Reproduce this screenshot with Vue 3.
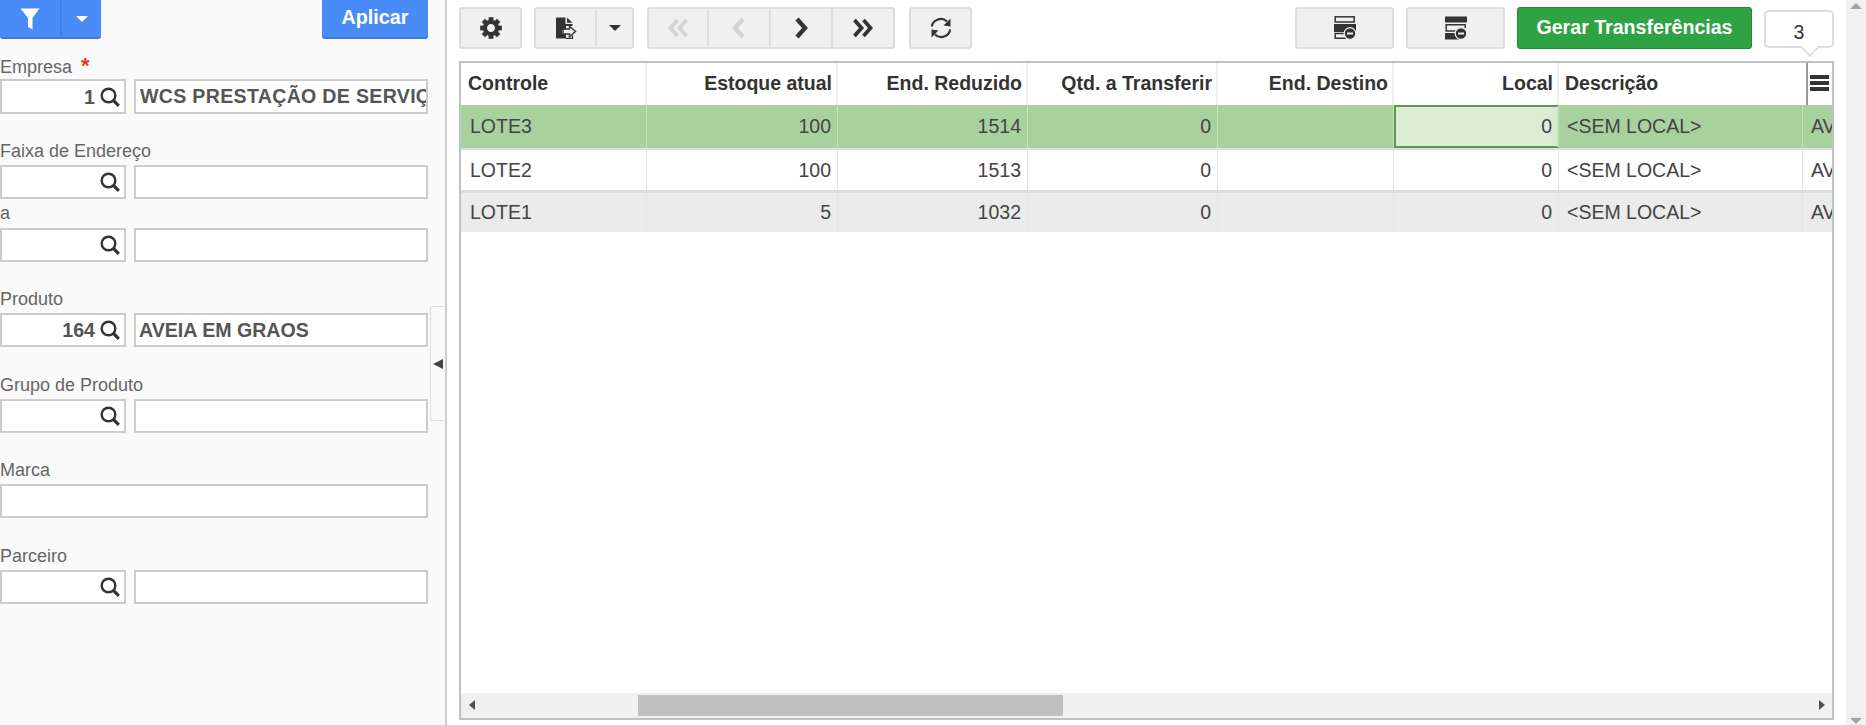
<script setup>
const columns = [
  { title: 'Controle', width: 186, left: true },
  { title: 'Estoque atual', width: 191 },
  { title: 'End. Reduzido', width: 190 },
  { title: 'Qtd. a Transferir', width: 190 },
  { title: 'End. Destino', width: 176 },
  { title: 'Local', width: 165 },
  { title: 'Descrição', width: 244, left: true },
  { title: '', width: 40, left: true }
]
const rows = [
  { id: 1, tone: 'selected', cells: ['LOTE3', '100', '1514', '0', '', '0', '<SEM LOCAL>', 'AVEIA'] },
  { id: 2, tone: 'plain', cells: ['LOTE2', '100', '1513', '0', '', '0', '<SEM LOCAL>', 'AVEIA'] },
  { id: 3, tone: 'alt', cells: ['LOTE1', '5', '1032', '0', '', '0', '<SEM LOCAL>', 'AVEIA'] }
]
const filters = [
  { label: 'Faixa de Endereço', search: true },
  { label: 'a', search: true, tight: true },
  { label: 'Produto', search: true, code: '164', name: 'AVEIA EM GRAOS' },
  { label: 'Grupo de Produto', search: true },
  { label: 'Marca' },
  { label: 'Parceiro', search: true }
]
const navIcons = [
  { d: 'M10.5 3L3.5 11L10.5 19M19.5 3L12.5 11L19.5 19', w: 3.8, off: true },
  { d: 'M15 2L7 11L15 20', w: 4.4, off: true },
  { d: 'M7 2L15 11L7 20', w: 4.4, off: false },
  { d: 'M2.5 3L9.5 11L2.5 19M11.5 3L18.5 11L11.5 19', w: 3.8, off: false }
]
const teeth = [0, 45, 90, 135, 180, 225, 270, 315]
const colStyle = (c) => ({ width: c.width + 'px' })
</script>

<template>
  <div class="page">
    <aside class="panel">
      <div class="panel-top">
        <div class="btn-blue split">
          <span class="funnel-wrap">
            <svg width="20" height="22" viewBox="0 0 20 22"><path d="M0.5 0.5H19.5L12.5 10V21.5L8 19V10Z" fill="#fff" /></svg>
          </span>
          <span class="caret-wrap"><i class="caret white"></i></span>
        </div>
        <button class="btn-blue apply">Aplicar</button>
      </div>

      <div class="field first">
        <label class="lbl">Empresa <b class="req">*</b></label>
        <div class="inputs">
          <div class="inp code first-inp"><span>1</span>
            <svg class="mag" width="20" height="20" viewBox="0 0 20 20"><circle cx="8.5" cy="8.5" r="6.8" fill="none" stroke="#333" stroke-width="2.4" /><path d="M13.4 13.4L18.8 18.8" stroke="#333" stroke-width="3.2" /></svg>
          </div>
          <div class="inp name first-inp wide">WCS PRESTAÇÃO DE SERVIÇOS</div>
        </div>
      </div>

      <div v-for="f in filters" :key="f.label" class="field" :class="{ tight: f.tight }">
        <label class="lbl">{{ f.label }}</label>
        <div v-if="f.search" class="inputs">
          <div class="inp code"><span>{{ f.code }}</span>
            <svg class="mag" width="20" height="20" viewBox="0 0 20 20"><circle cx="8.5" cy="8.5" r="6.8" fill="none" stroke="#333" stroke-width="2.4" /><path d="M13.4 13.4L18.8 18.8" stroke="#333" stroke-width="3.2" /></svg>
          </div>
          <div class="inp name">{{ f.name }}</div>
        </div>
        <div v-else class="inputs"><div class="inp full"></div></div>
      </div>

      <div class="collapse"><i class="tri-left"></i></div>
    </aside>

    <main class="main">
      <div class="toolbar">
        <button class="tb w62">
          <svg width="22" height="22" viewBox="-11 -11 22 22">
            <rect v-for="a in teeth" :key="a" x="-2.4" y="-10.8" width="4.8" height="6" fill="#333" :transform="`rotate(${a})`" />
            <circle r="6.1" fill="none" stroke="#333" stroke-width="4.2" />
          </svg>
        </button>
        <div class="group g-export">
          <button class="tb seg w62">
            <svg width="22" height="22" viewBox="0 0 22 22">
              <path d="M1 0.5H10.5V7H17.5V9H11V13H7V17H11V21.5H1Z" fill="#333" />
              <path d="M12 0.5L17.5 5.8H12Z" fill="#333" />
              <path d="M8 12H14.5V9.3L20.5 14.5L14.5 19.7V17H8Z" fill="#f0f0f0" stroke="#333" stroke-width="1.4" />
              <path d="M17.4 18.5V21.5H11" fill="none" stroke="#333" stroke-width="1.4" />
            </svg>
          </button>
          <button class="tb seg w39"><i class="caret"></i></button>
        </div>
        <div class="group g-nav">
          <button v-for="(n, i) in navIcons" :key="i" class="tb seg navb">
            <svg width="22" height="22" viewBox="0 0 22 22"><path :d="n.d" fill="none" :stroke="n.off ? '#d3d3d3' : '#333'" :stroke-width="n.w" /></svg>
          </button>
        </div>
        <button class="tb w63 refresh">
          <svg width="24" height="24" viewBox="0 0 24 24">
            <path d="M2.8 10.5A9 9 0 0 1 18 5.6" fill="none" stroke="#333" stroke-width="2.1" />
            <path d="M21.5 10.5V2.5L14.5 9.6Z" fill="#333" />
            <path d="M21.2 13.5A9 9 0 0 1 6 18.4" fill="none" stroke="#333" stroke-width="2.1" />
            <path d="M2.5 13.5V21.5L9.5 14.4Z" fill="#333" />
          </svg>
        </button>
        <span class="grow"></span>
        <button class="tb w99">
          <svg width="24" height="24" viewBox="0 0 24 24">
            <rect x="2.2" y="0.8" width="19" height="5.2" fill="#f0f0f0" stroke="#333" stroke-width="1.5" />
            <rect x="1" y="8" width="22" height="8" fill="#333" />
            <path d="M13 22.2H2.2V17.6H13" fill="none" stroke="#333" stroke-width="1.5" />
            <circle cx="17" cy="17.5" r="5.8" fill="#333" stroke="#f0f0f0" stroke-width="1.2" />
            <rect x="14" y="16.5" width="6" height="2" fill="#f0f0f0" />
          </svg>
        </button>
        <button class="tb w99">
          <svg width="24" height="24" viewBox="0 0 24 24">
            <rect x="1" y="0.5" width="22" height="6" fill="#333" />
            <path d="M13 15H2.2V8.8H21.2V12" fill="none" stroke="#333" stroke-width="1.5" />
            <rect x="1" y="17" width="14" height="6.5" fill="#333" />
            <circle cx="17" cy="17.5" r="5.8" fill="#333" stroke="#f0f0f0" stroke-width="1.2" />
            <rect x="14" y="16.5" width="6" height="2" fill="#f0f0f0" />
          </svg>
        </button>
        <button class="btn-green">Gerar Transferências</button>
        <div class="count">3</div>
      </div>

      <section class="grid">
        <div class="row head">
          <div v-for="c in columns" :key="c.title" class="cell" :class="{ left: c.left, menu: !c.title }" :style="colStyle(c)">
            <template v-if="c.title">{{ c.title }}</template>
            <svg v-else width="19" height="18" viewBox="0 0 19 18"><path d="M0 1H19V5H0ZM0 7H19V11H0ZM0 13H19V17H0Z" fill="#333" /></svg>
          </div>
        </div>
        <div v-for="r in rows" :key="r.id" class="row body" :class="r.tone">
          <div v-for="(c, i) in columns" :key="i" class="cell" :class="{ left: c.left, focus: r.id === 1 && i === 5 }" :style="colStyle(c)">{{ r.cells[i] }}</div>
        </div>
        <div class="filler"></div>
        <div class="hscroll">
          <i class="arrow-l"></i>
          <div class="thumb"></div>
          <i class="arrow-r"></i>
        </div>
      </section>
    </main>

    <div class="vscroll">
      <i class="up"></i>
      <i class="down"></i>
    </div>
  </div>
</template>

<style>
html, body { margin: 0; padding: 0; overflow: hidden; background: #fff; }
</style>

<style scoped>
.page {
  display: flex;
  width: 1866px;
  height: 725px;
  overflow: hidden;
  background: #fff;
  font-family: "Liberation Sans", Arial, sans-serif;
  color: #333;
}

/* left panel */
.panel {
  position: relative;
  box-sizing: border-box;
  width: 447px;
  flex: none;
  padding-right: 17px;
  background: #fafafa;
  border-right: 2px solid #ccc;
}
.panel-top { display: flex; justify-content: space-between; height: 39px; }
.btn-blue {
  box-sizing: border-box;
  height: 39px;
  border: 0;
  border-bottom: 2px solid #3a78dc;
  border-radius: 0 0 3px 3px;
  background: #4a8cf7;
  color: #fff;
  font: bold 19.8px "Liberation Sans", Arial, sans-serif;
}
.split { display: flex; width: 101px; }
.funnel-wrap { width: 62px; display: flex; align-items: center; justify-content: center; border-right: 2px solid #3f7fe6; box-sizing: border-box; }
.caret-wrap { flex: 1; display: flex; align-items: center; justify-content: center; }
.apply { width: 106px; padding: 0 0 2px; }
.caret { display: block; width: 0; height: 0; border: 6px solid transparent; border-top: 6px solid #333; border-bottom: 0; }
.caret.white { border-top-color: #fff; }

.field { margin-top: 29.5px; }
.field.first { margin-top: 18px; }
.field.tight { margin-top: 5px; }
.lbl { display: block; height: 22px; line-height: 17px; font-size: 18px; color: #666; }
.field.tight .lbl { height: 24px; line-height: 19px; }
.req { color: #e0392b; font-size: 22px; margin-left: 4px; line-height: 17px; font-weight: bold; }
.inputs { display: flex; gap: 8px; }
.inp {
  box-sizing: border-box;
  height: 34px;
  background: #fff;
  border: 2px solid #ccc;
  font-size: 19.6px;
  font-weight: bold;
  color: #555;
  line-height: 30px;
  white-space: nowrap;
  overflow: hidden;
}
.first-inp { height: 35px; margin-bottom: -1px; }
.code { display: flex; justify-content: flex-end; align-items: center; width: 126px; padding-right: 4px; gap: 5px; flex: none; }
.name { flex: 1; padding-left: 3px; }
.wide { letter-spacing: .3px; padding-left: 4px; }
.full { flex: 1; }
.mag { flex: none; }

.collapse {
  position: absolute;
  right: 0;
  top: 306px;
  box-sizing: border-box;
  width: 15px;
  height: 115px;
  background: #fafafa;
  border: 1px solid #ddd;
  border-right: 0;
  border-radius: 3px 0 0 3px;
  display: flex;
  align-items: center;
  justify-content: center;
}
.tri-left { width: 0; height: 0; border: 5px solid transparent; border-right: 10px solid #444; border-left: 0; }

/* main */
.main {
  flex: 1;
  min-width: 0;
  display: flex;
  flex-direction: column;
  padding: 7px 12px 5px 12px;
}
.toolbar { display: flex; height: 42px; margin-bottom: 12px; flex: none; }
.tb {
  box-sizing: border-box;
  height: 42px;
  padding: 0;
  background: #f0f0f0;
  border: 2px solid #ddd;
  border-radius: 3px;
  display: flex;
  align-items: center;
  justify-content: center;
  flex: none;
}
.w62 { width: 63px; }
.w63 { width: 63px; }
.w39 { width: 39px; }
.w99 { width: 99px; margin-left: 12px; }
.group { display: flex; margin-left: 12px; }
.seg { border-radius: 0; margin-left: -2px; }
.seg:first-child { margin-left: 0; border-radius: 3px 0 0 3px; }
.seg:last-child { border-radius: 0 3px 3px 0; }
.navb { width: 64px; }
.navb:first-child { width: 62px; }
.g-nav { margin-left: 13px; }
.refresh { margin-left: 14px; }
.grow { flex: 1; }
.btn-green {
  box-sizing: border-box;
  width: 235px;
  height: 42px;
  margin-left: 12px;
  flex: none;
  padding: 0 0 2px;
  border: 1px solid #23863a;
  border-radius: 3px;
  background: #2fa343;
  color: #fff;
  font: bold 19.6px "Liberation Sans", Arial, sans-serif;
}
.count {
  position: relative;
  box-sizing: border-box;
  width: 70px;
  height: 38px;
  margin: 3px 0 0 12px;
  flex: none;
  background: #fff;
  border: 2px solid #ddd;
  border-radius: 5px;
  text-align: center;
  line-height: 40px;
  font-size: 19.5px;
  color: #333;
}
.count::after {
  content: "";
  position: absolute;
  right: 15px;
  bottom: -9px;
  width: 12px;
  height: 12px;
  background: #fff;
  border-right: 2px solid #ddd;
  border-bottom: 2px solid #ddd;
  transform: rotate(45deg) scale(.9);
}

/* table */
.grid {
  flex: 1;
  min-height: 0;
  box-sizing: border-box;
  display: flex;
  flex-direction: column;
  border: 2px solid #bcc3c6;
  overflow: hidden;
}
.row { display: flex; flex: none; width: 1500px; }
.cell {
  box-sizing: border-box;
  flex: none;
  padding: 0 6px 0 8px;
  text-align: right;
  white-space: nowrap;
  overflow: hidden;
  border-right: 1px solid #e4e4e4;
}
.cell.left { text-align: left; }
.cell:first-child { padding-left: 9px; }
.head { height: 42px; background: #fff; }
.head .cell { font-size: 19.5px; font-weight: bold; line-height: 40px; padding: 0 4px 0 6px; border-right: 2px solid #eee; }
.head .cell:first-child { padding-left: 7px; }
.head .cell.menu { padding: 11px 0 0 2px; line-height: 0; border-left: 2px solid #999; border-right: 0; }
.head .cell:nth-child(7) { width: 247px !important; border-right: 0; }
.body { font-size: 19.5px; color: #444; }
.body .cell { height: 100%; line-height: 40px; }
.body:nth-child(2) { height: 45px; border-bottom: 2px solid #ddd; box-sizing: border-box; }
.body:nth-child(2) .cell { line-height: 43px; }
.body:nth-child(3) { height: 43px; border-bottom: 3px solid #ddd; box-sizing: border-box; }
.body:nth-child(4) { height: 39px; }
.body:nth-child(4) .cell { line-height: 38px; }
.selected { background: #a9d19e; }
.selected .cell { border-right-color: #c6e0be; }
.plain { background: #fff; }
.alt { background: #ebebeb; }
.focus { background: #dcebd4; border: 2px solid #5a9a4f; line-height: 39px !important; padding-right: 5px; }
.filler { flex: 1; }
.hscroll {
  position: relative;
  height: 25px;
  flex: none;
  background: #f0f0f0;
}
.thumb { position: absolute; left: 177px; top: 2px; width: 425px; height: 21px; background: #c0c0c0; }
.arrow-l, .arrow-r { position: absolute; top: 7px; width: 0; height: 0; border: 5px solid transparent; }
.arrow-l { left: 8px; border-right: 6px solid #505050; border-left: 0; }
.arrow-r { right: 7px; border-left: 6px solid #505050; border-right: 0; }

/* page scrollbar */
.vscroll { position: relative; width: 20px; flex: none; background: #f1f1f1; }
.up, .down { position: absolute; left: 4px; width: 0; height: 0; border: 6px solid transparent; }
.up { top: 3px; border-bottom: 6px solid #a3a3a3; border-top: 0; }
.down { bottom: 1px; border-top: 6px solid #a3a3a3; border-bottom: 0; }
</style>
